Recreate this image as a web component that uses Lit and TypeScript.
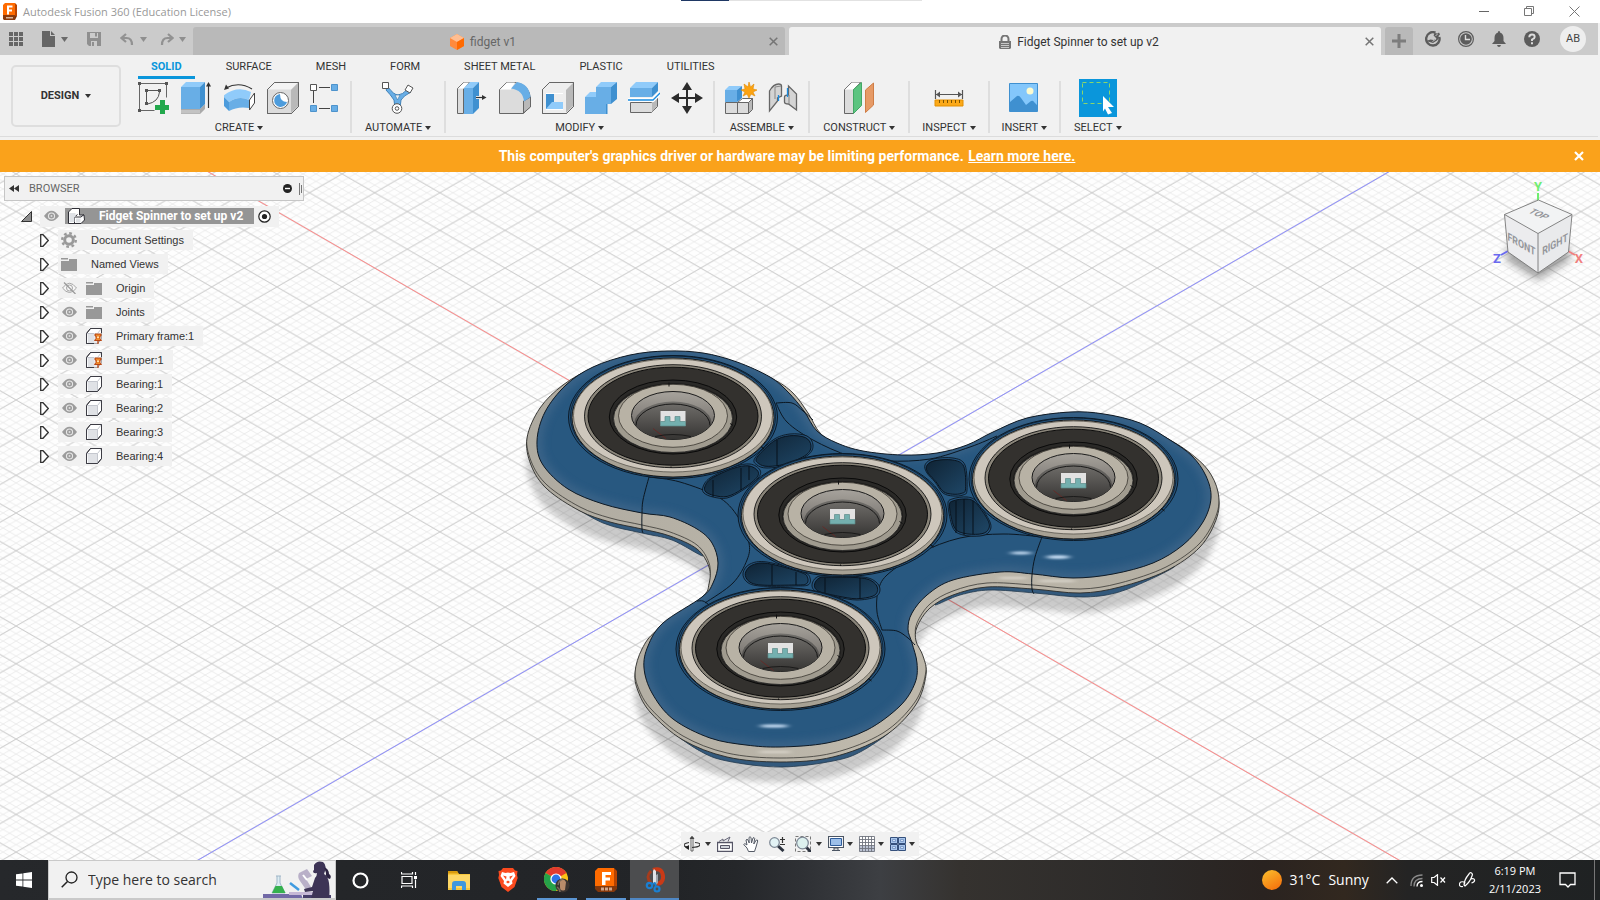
import { LitElement, html, svg, css } from "lit";
import { customElement, state } from "lit/decorators.js";
import { classMap } from "lit/directives/class-map.js";

/* ---------- shared styles ---------- */

const base = css`
  * { box-sizing: border-box; }
  svg { display: block; flex: none; }
  button {
    font: inherit; color: inherit; background: none; border: 0; padding: 0; margin: 0;
    display: flex; align-items: center; justify-content: center; cursor: pointer; white-space: nowrap;
  }
`;

/* ---------- icons: [width, height, drawing] ---------- */

const cube = (x = 0, y = 0) => svg`<g transform="translate(${x} ${y})" stroke="#3c3c44" stroke-linejoin="round">
  <path d="M.5 5.5 4.500.5h11v10l-4 5H.5z" fill="#fff"/><path d="M1.500 6h9.500v9h-9z" fill="#e0e2e6" stroke="none"/>
  <path d="M11.500 5.500h-11M11.500 5.500v10M11.500 5.500l4-5" fill="none" stroke="#c4c7ce"/><path d="M.5 5.500 4.500.5h11v10l-4 5H.5z" fill="none"/></g>`;

const folder = svg`<path d="M0 1h7v1.500H0zM8 2h8v12H0V4h8z" fill="#989898"/>`;

const icons: Record<string, [number, number, unknown]> = {
  fusion: [14, 17, svg`<path d="M2 0h10v13H0V2z" fill="#ff6b00"/><path d="M12 0l2 2v11h-2z" fill="#b84300"/><path d="M0 13h14l-2 4H2z" fill="#7a3208"/><path d="M0 12h12v5H1l-1-1z" fill="#8a3a0c"/><path d="M4 2.500h5.500v2H6v2h3v2H6v3H4z" fill="#fff"/><path d="M3 14h7v1.500H3z" fill="#d8b49c"/>`],
  minimize: [11, 11, svg`<path d="M0 5.500h10" stroke="#666"/>`],
  restore: [11, 11, svg`<path d="M.5 2.500h7v7h-7zM2.500 2.500v-2h7v7h-2" fill="none" stroke="#777"/>`],
  close: [11, 11, svg`<path d="M.5.5l10 10M10.500.5l-10 10" stroke="#777"/>`],
  grid: [14, 14, svg`<path d="M0 0h4v4H0zM5 0h4v4H5zM10 0h4v4h-4zM0 5h4v4H0zM5 5h4v4H5zM10 5h4v4h-4zM0 10h4v4H0zM5 10h4v4H5zM10 10h4v4h-4z" fill="#666"/>`],
  file: [13, 16, svg`<path d="M0 0h8v5h5v11H0zM9 0l4 4H9z" fill="#666"/>`],
  save: [14, 14, svg`<path d="M0 0h14v14H2l-2-2z" fill="#8f8f8f"/><path d="M3 1h8v5H3zM4 9h6v5H4z" fill="#cbcbcb"/><path d="M8 1h2v3.500H8zM5 10h2v4H5z" fill="#8f8f8f"/>`],
  undo: [14, 12, svg`<path d="M6 1 1.500 5 6 9M2 5h4.500Q12 5 12 12" fill="none" stroke="#929292" stroke-width="2.200"/>`],
  redo: [14, 12, svg`<path d="M8 1l4.500 4L8 9M12 5H7.500Q2 5 2 12" fill="none" stroke="#929292" stroke-width="2.200"/>`],
  down: [7, 5, svg`<path d="M0 0h7L3.500 5z" fill="currentColor"/>`],
  down5: [6, 4, svg`<path d="M0 0h6L3 4z" fill="currentColor"/>`],
  orangeCube: [14, 16, svg`<path d="M7 0l7 4v8l-7 4-7-4V4z" fill="#ff8a3c"/><path d="M7 0l7 4-7 4-7-4z" fill="#ffbe92"/><path d="M14 4v8l-7 4V8z" fill="#ff6a00"/>`],
  lock: [12, 14, svg`<path d="M0 6h12v7l-1 1H1l-1-1z" fill="#757575"/><path d="M2.500 6V4a3.500 3.500 0 0 1 7 0v2" fill="none" stroke="#757575" stroke-width="2"/><path d="M2 8.500h8M2 10.500h8M2 12.500h8" stroke="#ddd" stroke-width=".8"/>`],
  tabClose: [9, 9, svg`<path d="M.7.7l7.600 7.600M8.300.7.7 8.300" stroke="currentColor" stroke-width="1.500"/>`],
  plus: [14, 14, svg`<path d="M5.500 0h3v5.500H14v3H8.500V14h-3V8.500H0v-3h5.500z" fill="#7d7d7d"/>`],
  extension: [16, 16, svg`<path d="M10.500 1.700A6.700 6.700 0 1 0 14.300 6" fill="none" stroke="#5c5c5c" stroke-width="2.400"/><path d="M1 10l4.500-1.500L8.500 9l3-1.500L8.500 4.800 9.500 2l3 .5 1.500-1 1 2-1.500 1.500.5 2-2 2.500-4 2.500z" fill="#5c5c5c"/><path d="M8 4.500l3 3.500-3.500 2.500M12.500 3l-2 2" fill="none" stroke="#cbcbcb" stroke-width=".9"/>`],
  clock: [16, 16, svg`<circle cx="8" cy="8" r="7.400" fill="none" stroke="#5c5c5c" stroke-width="1.200"/><circle cx="8" cy="8" r="5.800" fill="#5c5c5c"/><path d="M7.500 4v4.500H12" fill="none" stroke="#ddd" stroke-width="1.400"/>`],
  bell: [14, 16, svg`<path d="M7 0q1 0 1 1.400Q11.500 2.500 11.500 7v3L14 13H0l2.500-3V7Q2.500 2.500 6 1.400 6 0 7 0zM5 14h4q-.5 2-2 2t-2-2z" fill="#5c5c5c"/>`],
  help: [16, 16, svg`<circle cx="8" cy="8" r="8" fill="#5c5c5c"/><path d="M5.300 6.200Q5.300 3.500 8 3.500t2.700 2.400Q10.700 7.300 8 8.500V10" fill="none" stroke="#ddd" stroke-width="1.900"/><path d="M7 11.200h2v2H7z" fill="#ddd"/>`],

  sketch: [32, 32, svg`<path d="M1.500 1.500h27v14M1.500 1.500v27h15" fill="none" stroke="#666"/><path d="M8.500 8.500h13M8.500 8.500v13M21.500 10q-1 10-12 12" fill="none" stroke="#555"/><path d="M0 0h3v3H0zM27 0h3v3h-3zM0 27h3v3H0zM7 7h3v3H7zM20 7h3v3h-3zM7 20h3v3H7z" fill="#555"/><path d="M22 18h5v5h4v5h-4v4h-5v-4h-5v-5h5z" fill="#22a84c"/>`],
  extrude: [32, 32, svg`<path d="M0 27h19l5-5v5l-5 5H0z" fill="#aaa"/><path d="M0 28h19v3.500H0z" fill="#c3c3c3"/><path d="M0 5h19v22H0z" fill="#68aee6"/><path d="M0 5l5-5h19l-5 5z" fill="#90cbfa"/><path d="M19 5l5-5v22l-5 5z" fill="#3f90d0"/><path d="M27.500 26V3" stroke="#333" stroke-width="1.200"/><path d="M27.500 0l2.500 4.500h-5z" fill="#333"/>`],
  revolve: [32, 32, svg`<path d="M2 6Q15-1 28 7" fill="none" stroke="#333" stroke-width="1.200"/><path d="M0 8l2-5.500 3 4z" fill="#333"/><path d="M-1 14Q13 3 27 10l-2 8q-10-5-20 2z" fill="#90cbfa"/><path d="M-1 14l6 6v9l-6-6z" fill="#4d9cdc"/><path d="M5 20q10-7 20-2v8Q14 24 5 29z" fill="#68aee6"/><path d="M25.500 18l5-7v10l-5 7z" fill="#fff" stroke="#444"/>`],
  hole: [32, 32, svg`<path d="M.5 7.500l7-7h24v24l-7 7H.5z" fill="#dcdcdc" stroke="#666"/><path d="M1 7.500l7-7h23l-7 7z" fill="#f4f4f4"/><path d="M24 8l7-7v23l-7 7z" fill="#b9b9b9"/><path d="M.5 7.500l7-7h24v24l-7 7H.5z" fill="none" stroke="#666"/><circle cx="13.500" cy="18.500" r="8" fill="#fff" stroke="#666"/><path d="M13 12a6.500 6.500 0 1 0 7 8q-7 0-7-8z" fill="#4d9cdc"/>`],
  pattern: [30, 32, svg`<path d="M9 5.500h11M3.500 9v12M9 26.500h11" stroke="#444"/><path d="M.5 2.500h6v6h-6z" fill="#fff" stroke="#555"/><path d="M21.500 2.500h6v6h-6zM.5 23.500h6v6h-6zM21.500 23.500h6v6h-6z" fill="#68aee6" stroke="#4d93cc"/>`],
  automate: [32, 32, svg`<path d="M6 5q6 8 10 8t10-6l3 3q-8 4-10 8l-1 8h-5l-1-8Q8 12 4 8z" fill="#68aee6" stroke="#4182b8"/><path d="M13 13h5l-2.500 5z" fill="#f1f1f1" stroke="#4182b8" stroke-width=".7"/><path d="M.5.5h6v6h-6zM26 3l5 3-3 5-5-3z" fill="#fff" stroke="#555"/><circle cx="15" cy="26.500" r="4.800" fill="#fff" stroke="#555"/><circle cx="15" cy="26.500" r="1.800" fill="none" stroke="#555"/>`],
  presspull: [32, 32, svg`<path d="M1.500 31.500v-25l6-6h6l-6 6v25z" fill="#dcdcdc" stroke="#666"/><path d="M2 6.500l6-6h5l-5 6z" fill="#fff"/><path d="M8 6h9v26H8z" fill="#68aee6"/><path d="M8 6l6-6h9l-6 6z" fill="#90cbfa"/><path d="M17 6l6-6v26l-6 6z" fill="#3f90d0"/><path d="M20 15.500h7" stroke="#fff" stroke-width="3"/><path d="M20 15.500h7" stroke="#333" stroke-width="1.300"/><path d="M30.500 15.500L26 13v5z" fill="#333"/>`],
  fillet: [32, 32, svg`<path d="M.5 31.500v-24l7-7H16q15 2 15.500 17v7l-7 7z" fill="#dcdcdc" stroke="#666"/><path d="M1 7.500l7-7h8l-4 7z" fill="#fff"/><path d="M24.500 19l7-4v10l-7 6z" fill="#b9b9b9" stroke="#666"/><path d="M12 6.500L18 0q12 2 13.500 15L25 19.500Q24 8 12 6.500z" fill="#68aee6"/>`],
  shell: [32, 32, svg`<path d="M.5 7.500l7-7h24v24l-7 7H.5z" fill="#eee" stroke="#666"/><path d="M24 8l7-7v23l-7 7z" fill="#b9b9b9"/><path d="M.5 7.500l7-7h24v24l-7 7H.5z" fill="none" stroke="#666"/><path d="M4 11h17v17H4z" fill="#fff"/><path d="M4 12h8v8l-7 7H4z" fill="#3f90d0"/><path d="M12 12h9v8h-9z" fill="#eee"/><path d="M10 20h11v7H4z" fill="#90cbfa"/>`],
  combine: [32, 32, svg`<path d="M0 15h11V5h15v17h-5v10H0z" fill="#68aee6"/><path d="M0 15l5-5h6v5zM11 5l5-5h16l-6 5z" fill="#90cbfa"/><path d="M26 5l6-5v17l-6 5zM21 22h1v10h-1z" fill="#3f90d0"/><path d="M22 22v10" stroke="#3f90d0" stroke-width="1"/>`],
  split: [32, 32, svg`<path d="M2.500 20.500h21l6-5v9l-6 6h-21z" fill="#dcdcdc" stroke="#666"/><path d="M24 21l5-5v8l-5 6z" fill="#b9b9b9"/><path d="M2 6h22v9H2z" fill="#68aee6"/><path d="M2 6l6-6h22l-6 6z" fill="#90cbfa"/><path d="M24 6l6-6v9l-6 6z" fill="#3f90d0"/><path d="M0 18h25l7-7" fill="none" stroke="#fff" stroke-width="4"/><path d="M0 18h25l7-7" fill="none" stroke="#1a8ce0" stroke-width="1.300"/>`],
  move: [32, 32, svg`<path d="M15 6h2v9h9v2h-9v9h-2v-9H6v-2h9z" fill="#2b2b2b"/><path d="M16 0l5 8H11zM16 32l5-8H11zM0 16l8-5v10zM32 16l-8-5v10z" fill="#2b2b2b"/>`],
  component: [32, 32, svg`<path d="M.5 20.500h12v11H.5zM12.500 20.500h11v11h-11z" fill="#dcdcdc" stroke="#666"/><path d="M12.500 20.500l5-4h10l-4 4z" fill="#fff" stroke="#666"/><path d="M23.500 20.500l4-4v11l-4 4z" fill="#b9b9b9" stroke="#666"/><path d="M0 8h12v12H0z" fill="#68aee6"/><path d="M0 8l4-4h13l-5 4z" fill="#90cbfa"/><path d="M12 8l5-4v12l-5 4z" fill="#3f90d0"/><path d="M24 0l1.500 5L29 2l-1 5 4 1-4 2 2 4-4-2-2 4-2-4-4 2 2-4-4-2 4-1-1-5 4 3z" fill="#fca311" stroke="#e08a00" stroke-width=".6"/>`],
  joint: [30, 32, svg`<path d="M1.500 9q4-7 9-7 3 0 3 2v10l-4 2v3l-8 10z" fill="#d4d4d4" stroke="#666" stroke-width="1.300"/><path d="M7 5v12M7 5l6-1" fill="none" stroke="#888"/><path d="M16.500 15q0-2 4-2V4l8 8v16l-8-6q-4 0-4-2z" fill="#d4d4d4" stroke="#666" stroke-width="1.300"/><path d="M21 13v9" stroke="#888"/><path d="M10.500 13v6M19.500 6v9" stroke="#1a8ce0" stroke-width="1.300"/>`],
  plane: [32, 32, svg`<path d="M1.500 31.500v-24l7-7h9l-7 7v24z" fill="#dcdcdc" stroke="#666"/><path d="M2 7.500l7-7h8l-7 7z" fill="#fff"/><path d="M10.500 7.500l8-7v23l-8 8z" fill="#5cc480" stroke="#43a866"/><path d="M22.500 8l8-7v22l-8 7.500z" fill="#e69a66" stroke="#cf7d45"/>`],
  measure: [30, 32, svg`<path d="M1.500 8v9M28.500 8v9M2 12.500h26" stroke="#555" stroke-width="1.200"/><path d="M2 12.500l4-3v6zM28 12.500l-4-3v6z" fill="#555"/><path d="M1 18h28v6H1z" fill="#fba919" stroke="#e38f00"/><path d="M5.500 18v3M9.500 18v3M13.500 18v3M17.500 18v3M21.500 18v3M25.500 18v3" stroke="#7a5200"/>`],
  image: [30, 32, svg`<path d="M.5 1.500h28v28H.5z" fill="#84c7fb" stroke="#3f90d0"/><path d="M1 20l7-6q2-1 4 2l5 7 5-4q2-1 3 1l3 3v6H1z" fill="#3f90d0"/><circle cx="21" cy="9" r="3.500" fill="#fdfbd0"/>`],
  select: [38, 38, svg`<path d="M0 0h38v38H0z" fill="#0a96db"/><path d="M3.500 3.500h27v21h-27z" fill="none" stroke="#8bd66b" stroke-dasharray="4 3"/><path d="M24 17l11 11h-6l4 6-4 1.500-3-6-2 3z" fill="#fff"/>`],

  rewind: [10, 7, svg`<path d="M5 0v7L0 3.500zM10 0v7L5 3.500z" fill="#333"/>`],
  minusDot: [9, 9, svg`<circle cx="4.500" cy="4.500" r="4.500" fill="#222"/><path d="M2 4.500h5" stroke="#fff" stroke-width="1.400"/>`],
  grip: [3, 12, svg`<path d="M.5 0v12M2.500 2v8" stroke="#777"/>`],
  expanded: [11, 11, svg`<path d="M.5 10.500h10V.5z" fill="#8f8f8f" stroke="#333"/>`],
  collapsed: [9, 13, svg`<path d="M.7.7h2.300l5.300 5.800L3 12.300H.7z" fill="#fff" stroke="#333" stroke-width="1.300"/>`],
  eye: [15, 12, svg`<path d="M0 6Q7.500-4.500 15 6 7.500 16 0 6z" fill="#9b9b9b"/><circle cx="7.500" cy="6" r="3.600" fill="#e8e8e8"/><circle cx="7.500" cy="6" r="2.500" fill="#9b9b9b"/><circle cx="7.500" cy="6" r="1" fill="#ddd"/>`],
  eyeOff: [15, 12, svg`<path d="M.5 6Q7.500-3.500 14.500 6 7.500 15 .5 6z" fill="#f6f6f6" stroke="#a5a5a5"/><circle cx="7.500" cy="6" r="3" fill="none" stroke="#a5a5a5"/><path d="M2 .5L13.500 12" stroke="#999" stroke-width="1.200"/>`],
  gear: [16, 16, svg`<circle cx="8" cy="8" r="4.300" fill="none" stroke="#999" stroke-width="3"/><circle cx="8" cy="8" r="6.800" fill="none" stroke="#999" stroke-width="2.400" stroke-dasharray="2.700 2.640"/>`],
  folder: [16, 14, folder],
  body: [16, 16, cube()],
  pinned: [16, 16, svg`${cube()}<path d="M8 5h8v11H8z" fill="#f1f1f1" opacity=".6"/><path d="M9 6h6v2h-1v2.500l1.500 2h-7l1.500-2V8H9z" fill="#f08a2c" stroke="#b23c0a" stroke-width=".9"/><path d="M11 8.500h2v1.500h-2z" fill="#ffe0b0"/><path d="M12 12.500V16" stroke="#b23c0a" stroke-width="1.200"/>`],
  assembly: [17, 16, svg`<g stroke="#2f2f36" stroke-linejoin="round"><path d="M.5 4L4 .5h7.500V7H16l.500 5L13 15.500H.500z" fill="#fff"/><path d="M6.500 9l3-2.500M6.500 9v6.500M6.500 9H13M13 9l3-2.500" fill="none"/><path d="M1.500 5h6v4h-1v5h-5zM8 10.500h4.500v4H8z" fill="#dfe2e6" stroke="none"/></g>`],
  radio: [13, 13, svg`<circle cx="6.500" cy="6.500" r="5.700" fill="#fff" stroke="#222" stroke-width="1.200"/><circle cx="6.500" cy="6.500" r="2.600" fill="#222"/>`],

  orbit: [16, 16, svg`<path d="M7 1h2v14H7z" fill="#fff" stroke="#555" stroke-width=".9"/><path d="M8 0l2.500 3h-5z" fill="#444"/><path d="M5 6.500q-5 1-5 2.500 0 2 5 2M11 6.500q5 .5 5 2 0 2.500-8 3" fill="none" stroke="#333" stroke-width="1.200"/><path d="M1 11.500l4-2.500v5z" fill="#222"/>`],
  lookat: [16, 16, svg`<path d="M.5 6.500h15v9H.5z" fill="#fff" stroke="#556" stroke-width="1.300"/><path d="M3.500 9.500h9v3h-9z" fill="#cfd3da" stroke="#556"/><path d="M2 5.500L6 3v2l7-4-2 4.500" fill="#e8eaee" stroke="#667"/>`],
  hand: [16, 16, svg`<path d="M5.500 15.500L4 12 .7 8.500Q1.500 6.500 4 9L3 4q1-1.500 2 0l1.200 3L6 1.500q1-1.500 2 0L8.500 7 10 2q1.200-1 1.700.3L10.800 8l2.500-4q1.500-.5 1.400 1L13 11l-1.500 4.500z" fill="#fff" stroke="#555b66"/>`],
  zoom: [16, 16, svg`<path d="M8.500 9.500l6 5.500" stroke="#2d3440" stroke-width="3"/><circle cx="5.500" cy="6.500" r="4.800" fill="#e3f3f5" stroke="#7c8794" stroke-width="1.200"/><path d="M13.500 1v6M11 3.500h5M11 8.500h5" stroke="#333" stroke-width="1.200"/>`],
  fit: [16, 16, svg`<path d="M.5.5h15v15H.5z" fill="none" stroke="#777" stroke-dasharray="3 2"/><path d="M11 11l5 5" stroke="#2d3440" stroke-width="3"/><circle cx="7.500" cy="7" r="5.800" fill="#dcf0ee" stroke="#7c8794" stroke-width="1.200"/>`],
  display: [16, 16, svg`<path d="M.5.5h15v11H.5z" fill="#fff" stroke="#4b5563" stroke-width="1.200"/><path d="M2.500 2.500h11v7h-11z" fill="#9dc0ea" stroke="#2f5d9c"/><path d="M6 12h4v2.500H6zM4 14.500h8" fill="#ddd" stroke="#4b5563"/>`],
  gridset: [16, 16, svg`<path d="M.5.5h15v15H.5z" fill="#fff"/><path d="M.5 10h15v5.500H.5z" fill="#bcc3d4"/><path d="M.5.5h15v15H.5zM3.500 0v16M6.500 0v16M9.500 0v16M12.500 0v16M0 3.500h16M0 6.500h16M0 9.500h16M0 12.500h16" fill="none" stroke="#70757f" stroke-width=".9"/>`],
  views: [16, 14, svg`<path d="M.5.5h7v6h-7zM8.500.5h7v6h-7zM.5 7.500h7v6h-7zM8.500 7.500h7v6h-7z" fill="#a9c6ec" stroke="#35507c"/><path d="M2.500 2.500h3v2h-3zM10.500 2.500h3v2h-3zM2.500 9.500h3v2h-3zM10.500 9.500h3v2h-3z" fill="#cfe0f6" stroke="#6f8fc0" stroke-width=".8"/>`],

  windows: [16, 16, svg`<path d="M0 2.300l6.500-.9v6.200H0zM7.300 1.300L16 0v7.600H7.300zM0 8.400h6.500v6.200L0 13.700zM7.300 8.400H16V16l-8.700-1.300z" fill="#fff"/>`],
  search: [17, 17, svg`<circle cx="10.500" cy="6.500" r="5.500" fill="none" stroke="#222" stroke-width="1.300"/><path d="M6.500 10.500L.7 16.300" stroke="#222" stroke-width="1.500"/>`],
  cortana: [17, 17, svg`<circle cx="8.500" cy="8.500" r="7" fill="none" stroke="#fff" stroke-width="2.200"/>`],
  taskview: [18, 16, svg`<path d="M1 4.500h10v7H1zM.5 0v2h11V0M.5 16v-2h11v2M14.500 0v3M14.500 7.500V16" fill="none" stroke="#fff" stroke-width="1.200"/><path d="M13 4h3v3h-3z" fill="#fff"/>`],
  explorer: [22, 19, svg`<path d="M0 0h9l2 3h11v16H0z" fill="#f8c73c"/><path d="M0 0h9l1.500 2.500H0z" fill="#d99b0d"/><path d="M0 4h22v13H0z" fill="#fdd766"/><path d="M4 19v-6q0-3 3-3h8q3 0 3 3v6h-4v-4H8v4z" fill="#3f97dd"/>`],
  brave: [20, 24, svg`<path d="M5 0h10l2 2.500 2.500.5-.5 4 .7 3-3.200 9-6.500 5-6.500-5L.3 10 1 7l-.5-4L3 2.500z" fill="#fb4a1e"/><path d="M4 4l3.500 1L10 4.500l2.500.5L16 4l1.500 4-3.500 5 .5 2.500L10 19l-4.500-3.500L6 13 2.500 8z" fill="#fff"/><path d="M5 7.500l3.500 1-.5 3zM15 7.500l-3.500 1 .5 3zM8 14l2-1.500 2 1.500-2 1.500z" fill="#fb4a1e"/>`],
  chrome: [26, 26, svg`<circle cx="12" cy="12" r="12" fill="#fbc116"/><path d="M12 12L1.600 6A12 12 0 0 1 22.400 6z" fill="#e33b2e"/><path d="M12 12L1.600 6A12 12 0 0 0 12 24l4-7z" fill="#25a249"/><circle cx="12" cy="12" r="5.600" fill="#fff"/><circle cx="12" cy="12" r="4.400" fill="#2f74e8"/><circle cx="18.500" cy="18.500" r="7" fill="#3b3430"/><path d="M16 13q4-2 6 2l-1 8q-5 2-5-3z" fill="#b98c6a"/><path d="M13 20q3 2 3 5M19 12q-4 1-5 6" fill="none" stroke="#7a6b5c" stroke-width="1.500"/>`],
  fusionBig: [22, 24, svg`<path d="M3 0h16v19H0V3z" fill="#ff6b00"/><path d="M19 0l3 3v16h-3z" fill="#b84300"/><path d="M0 18h22v3l-3 3H3l-3-3z" fill="#83370b"/><path d="M7 4h9v3h-5.500v2.500H15v3h-4.500V17H7z" fill="#fff"/><path d="M6 19.500h3v3H6zM10 19.500h3v3h-3zM14 19.500h3v3h-3z" fill="#cfa58b"/>`],
  snip: [20, 26, svg`<path d="M8 3q9-3 10 6 .5 7-6 8" fill="none" stroke="#c93a17" stroke-width="4"/><path d="M6 4Q0 10 6 16" fill="none" stroke="#a83c1c" stroke-width="3"/><path d="M9 2l2 2v13H8V4z" fill="#dfe3e8"/><path d="M11 8l2-1v9l-2 2z" fill="#9aa2ab"/><circle cx="4.500" cy="18.500" r="2.700" fill="none" stroke="#1b7fd0" stroke-width="2.200"/><circle cx="12" cy="22" r="2.500" fill="none" stroke="#1b7fd0" stroke-width="2.200"/><path d="M6.500 17.500l4-2M11 20l-1-4" stroke="#1b7fd0" stroke-width="1.800"/>`],
  sun: [20, 20, svg`<defs><linearGradient id="sunFill" x1="0" y1="0" x2=".6" y2="1"><stop offset="0" stop-color="#fbc02d"/><stop offset="1" stop-color="#f5760f"/></linearGradient></defs><circle cx="10" cy="10" r="10" fill="url(#sunFill)"/>`],
  chevron: [12, 7, svg`<path d="M.7 6.300L6 1l5.300 5.300" fill="none" stroke="#fff" stroke-width="1.300"/>`],
  wifi: [13, 13, svg`<g fill="none" stroke="#8a8a8a" stroke-width="1.300"><path d="M1 12Q1 1 12.500 1"/><path d="M4 12.500q0-8 8.500-8"/></g><path d="M7 12.500q0-5 5.500-5" fill="none" stroke="#fff" stroke-width="1.300"/><circle cx="11.500" cy="11.500" r="1.500" fill="#fff"/>`],
  mute: [15, 12, svg`<path d="M.7 3.500H3L6.500.7v10.600L3 8.500H.7z" fill="none" stroke="#fff" stroke-width="1.200"/><path d="M9.500 3.500l4.500 5M14 3.500l-4.500 5" stroke="#fff" stroke-width="1.200"/>`],
  pen: [17, 16, svg`<path d="M5 13q0-5 5-11 1-2 2.500-1t.500 3q-2 6-7 10zM5 13l1-3M5 10q-4-1-4.500 2t3.500 2.500M12 7q3-1 3.500 1t-3 3" fill="none" stroke="#fff" stroke-width="1.200"/>`],
  notice: [17, 16, svg`<path d="M1 1h15v11.500h-4.500L9 15l-2.500-2.500H1z" fill="none" stroke="#fff" stroke-width="1.300"/>`],
  bannerClose: [10, 10, svg`<path d="M1 1l8 8M9 1L1 9" stroke="#fff" stroke-width="2.200"/>`],
};

const icon = (name: string) => {
  const [w, h, art] = icons[name];
  return html`<svg width=${w} height=${h} viewBox="0 0 ${w} ${h}" aria-hidden="true">${art}</svg>`;
};

/* ---------- window frame: title and document tabs ---------- */

@customElement("window-header")
class WindowHeader extends LitElement {
  static styles = [base, css`
    :host { display: block; font: 12px/16px Roboto, sans-serif; color: #444; background: #f1f1f1; }
    .title { display: flex; align-items: center; height: 23px; background: #fff; padding: 0 20px 0 3px; color: #999; gap: 6px;
      font: 11px/16px "Open Sans", "Noto Sans", sans-serif; }
    .name { flex: 1; }
    .loading { align-self: flex-start; width: 241px; height: 1px; margin-right: 1px; background: linear-gradient(90deg, #1f3864 48px, #e2e2e2 48px); }
    .controls { flex: 1; display: flex; justify-content: flex-end; gap: 34px; }
    .bar { display: flex; height: 32px; background: #cbcbcb; margin-right: 2px; }
    .quick { width: 193px; display: flex; align-items: center; padding-left: 9px; color: #6a6a6a; }
    .quick .file { margin-left: 19px; gap: 6px; }
    .quick .save { margin-left: 19px; }
    .quick .undo { margin-left: 19px; gap: 6px; color: #8f8f8f; }
    .quick .redo { margin-left: 13px; gap: 5px; color: #8f8f8f; }
    .tabs { flex: 1; display: flex; gap: 4px; padding-top: 4px; }
    .tab { flex: 1; display: flex; align-items: center; padding: 0 7px 0 4px; background: #b9b9b9; border-radius: 3px 3px 0 0; color: #666; }
    .tab.on { background: #f1f1f1; color: #333; }
    .label { flex: 1; gap: 6px; padding-top: 1px; }
    .x { color: #757575; }
    .plus { width: 28px; margin: 4px 0 0 4px; background: #b9b9b9; border-radius: 3px 3px 0 0; }
    .right { display: flex; align-items: center; padding: 0 12px; gap: 17px; }
    .right button { min-width: 16px; }
    .right .avatar { width: 26px; height: 26px; margin-left: 3px; border-radius: 13px; background: #eee; color: #444; font-size: 11px; }
  `];
  render() {
    return html`
      <div class="title">${icon("fusion")}<span class="name">Autodesk Fusion 360 (Education License)</span>
        <div class="loading"></div>
        <div class="controls"><button aria-label="Minimize">${icon("minimize")}</button><button aria-label="Restore">${icon("restore")}</button><button aria-label="Close">${icon("close")}</button></div>
      </div>
      <div class="bar">
        <div class="quick">
          <button aria-label="Data panel">${icon("grid")}</button>
          <button class="file" aria-label="File">${icon("file")}${icon("down")}</button>
          <button class="save" aria-label="Save">${icon("save")}</button>
          <button class="undo" aria-label="Undo">${icon("undo")}${icon("down")}</button>
          <button class="redo" aria-label="Redo">${icon("redo")}${icon("down")}</button>
        </div>
        <div class="tabs">
          <div class="tab"><button class="label">${icon("orangeCube")}fidget v1</button><button class="x" aria-label="Close tab">${icon("tabClose")}</button></div>
          <div class="tab on"><button class="label">${icon("lock")}Fidget Spinner to set up v2</button><button class="x" aria-label="Close tab">${icon("tabClose")}</button></div>
        </div>
        <button class="plus" aria-label="New design">${icon("plus")}</button>
        <div class="right">
          <button aria-label="Extensions">${icon("extension")}</button><button aria-label="Job status">${icon("clock")}</button>
          <button aria-label="Notifications">${icon("bell")}</button><button aria-label="Help">${icon("help")}</button>
          <button class="avatar">AB</button>
        </div>
      </div>`;
  }
}

/* ---------- ribbon ---------- */

const groups: { name: string; tools: string[]; size?: string }[] = [
  { name: "CREATE", tools: ["sketch", "extrude", "revolve", "hole", "pattern"] },
  { name: "AUTOMATE", tools: ["automate"], size: "wide" },
  { name: "MODIFY", tools: ["presspull", "fillet", "shell", "combine", "split", "move"] },
  { name: "ASSEMBLE", tools: ["component", "joint"] },
  { name: "CONSTRUCT", tools: ["plane"], size: "wide" },
  { name: "INSPECT", tools: ["measure"], size: "slim" },
  { name: "INSERT", tools: ["image"], size: "slim" },
  { name: "SELECT", tools: ["select"], size: "wide" },
];

@customElement("tool-ribbon")
class ToolRibbon extends LitElement {
  @state() private tab = "SOLID";
  static styles = [base, css`
    :host { display: flex; height: 85px; background: #f1f1f1; color: #333; font: 11px/14px Roboto, sans-serif; padding-left: 11px;
      background-image: linear-gradient(#dcdcdc, #dcdcdc); background-size: calc(100% - 2px) 1px; background-position: 0 81px; background-repeat: no-repeat; }
    .design { width: 110px; height: 62px; margin-top: 10px; border: 2px solid #dedede; border-radius: 5px; font-weight: 700; gap: 6px; }
    .main { margin-left: 17px; }
    .tabs { display: flex; gap: 18px; height: 24px; }
    .tabs button { padding: 4px 13px 1px; border-bottom: 3px solid transparent; }
    .tabs .on { color: #0a96db; font-weight: 700; border-bottom-color: #0a96db; }
    .groups { display: flex; }
    .group { display: flex; flex-direction: column; align-items: center; padding: 0 10px; border-right: 2px solid #dedede; height: 52px; margin-top: 2px; }
    .group:first-child { padding-left: 0; }
    .group:last-child { border: 0; }
    .group.wide { padding: 0 13px; }
    .group.slim { padding: 0 12px; }
    .tools { display: flex; flex: none; height: 34px; gap: 11px; align-items: center; }
    .menu { flex: none; gap: 3px; margin-top: 6px; }
  `];
  render() {
    return html`
      <button class="design">DESIGN ${icon("down5")}</button>
      <div class="main">
        <div class="tabs">${["SOLID", "SURFACE", "MESH", "FORM", "SHEET METAL", "PLASTIC", "UTILITIES"].map(t =>
          html`<button class=${classMap({ on: t === this.tab })} @click=${() => (this.tab = t)}>${t}</button>`)}</div>
        <div class="groups">${groups.map(g => html`
          <div class=${classMap({ group: true, wide: g.size === "wide", slim: g.size === "slim" })}>
            <div class="tools">${g.tools.map(t => html`<button aria-label=${t}>${icon(t)}</button>`)}</div>
            <button class="menu">${g.name} ${icon("down5")}</button>
          </div>`)}</div>
      </div>`;
  }
}

/* ---------- 3D scene ---------- */

type Pt = [number, number];

/* Catmull-Rom spline through the points, written as cubic segments. */
const smooth = (p: Pt[], closed = true) => {
  const n = p.length;
  const at = (i: number) => (closed ? p[(i + n) % n] : p[Math.max(0, Math.min(n - 1, i))]);
  let d = `M${p[0][0]} ${p[0][1]}`;
  for (let i = 0; i < (closed ? n : n - 1); i++) {
    const [a, b, c, e] = [at(i - 1), at(i), at(i + 1), at(i + 2)];
    d += `C${(b[0] + (c[0] - a[0]) / 6).toFixed(1)} ${(b[1] + (c[1] - a[1]) / 6).toFixed(1)} ${(c[0] - (e[0] - b[0]) / 6).toFixed(1)} ${(c[1] - (e[1] - b[1]) / 6).toFixed(1)} ${c[0]} ${c[1]}`;
  }
  return closed ? d + "Z" : d;
};

/* Scales an outline about its own middle. */
const inset = (p: Pt[], kx: number, ky: number): Pt[] => {
  const cx = p.reduce((a, q) => a + q[0], 0) / p.length;
  const cy = p.reduce((a, q) => a + q[1], 0) / p.length;
  return p.map(([x, y]): Pt => [cx + (x - cx) * kx, cy + (y - cy) * ky]);
};

const rimOuter: Pt[] = [
  [563, 385], [540, 408], [527, 438], [531, 465], [547, 489], [580, 511], [610, 522], [642, 529], [670, 536], [697, 549], [709, 567], [709, 584], [701, 598],
  [657, 630], [642, 649], [635, 672], [638, 691], [651, 713], [683, 740], [727, 757], [780, 762], [833, 757], [883, 737], [915, 706], [926, 675], [923, 656],
  [916, 641], [917, 627], [930, 608], [953, 595], [987, 587], [1033, 589], [1080, 593], [1120, 587], [1166, 571], [1200, 547], [1217, 517], [1218, 492], [1208, 470], [1190, 453],
  [1170, 440], [1140, 424], [1104, 415], [1070, 413], [1027, 419], [993, 433], [967, 446], [937, 454], [902, 456], [863, 452], [837, 444], [820, 433], [808, 413], [793, 393],
  [773, 379], [737, 363], [703, 354], [667, 352], [630, 356], [593, 368],
];
const topFace: Pt[] = [
  [566, 385], [545, 412], [537, 441], [543, 465], [568, 489], [603, 504], [642, 513], [670, 517], [697, 529], [712, 543], [718, 563], [713, 583], [702, 597],
  [663, 623], [648, 646], [644, 668], [652, 693], [673, 719], [710, 738], [746, 745], [780, 747], [827, 743], [867, 730], [900, 706], [915, 683], [917, 663], [912, 643],
  [908, 629], [912, 613], [927, 595], [953, 580], [1000, 572], [1033, 574], [1073, 578], [1113, 574], [1153, 563], [1183, 545], [1203, 522], [1211, 498], [1206, 476], [1192, 456],
  [1170, 440], [1140, 423], [1104, 414], [1070, 412], [1027, 418], [993, 432], [967, 445], [937, 453], [902, 455], [863, 451], [837, 443], [817, 431], [804, 411], [788, 392],
  [770, 377], [737, 362], [703, 353], [667, 351], [630, 355], [593, 367],
];
/* Slivers of the lower blue shell that show below the rim. */
const underside: Pt[][] = [
  [[568, 502], [603, 523], [642, 533], [672, 540], [703, 556], [690, 540], [642, 524], [600, 512]],
  [[675, 732], [700, 751], [727, 761], [780, 767], [833, 761], [862, 751], [890, 730], [833, 750], [780, 755], [727, 750]],
  [[935, 605], [960, 595], [990, 590], [1035, 593], [1085, 597], [1125, 590], [1175, 566], [1120, 580], [1080, 586], [1033, 584], [987, 580], [950, 592]],
];
const pockets: Pt[][] = [
  [[755, 458], [773, 440], [790, 434], [807, 436], [813, 445], [808, 455], [787, 465], [767, 468], [757, 465]],
  [[703, 487], [710, 478], [733, 467], [750, 464], [760, 470], [758, 478], [743, 490], [727, 498], [713, 497], [704, 493]],
  [[743, 573], [750, 564], [767, 562], [803, 572], [810, 578], [808, 585], [793, 586], [760, 586], [747, 582]],
  [[812, 585], [817, 577], [830, 576], [863, 577], [876, 582], [880, 590], [875, 597], [857, 600], [837, 597], [817, 592]],
  [[925, 465], [933, 459], [953, 458], [965, 465], [967, 490], [963, 495], [953, 496], [943, 493], [935, 482], [927, 473]],
  [[948, 505], [952, 499], [967, 497], [977, 502], [990, 522], [989, 532], [980, 536], [963, 535], [953, 528]],
];
const seams: Pt[][] = [
  [[649, 477], [680, 482], [720, 498], [740, 520], [749, 543], [747, 560], [733, 583], [705, 603]],
  [[649, 477], [643, 500], [642, 514], [642, 529], [643, 533]],
  [[776, 403], [792, 403], [803, 411], [813, 420]],
  [[776, 403], [787, 422], [813, 440], [850, 456], [887, 461], [930, 459], [970, 447], [997, 436]],
  [[882, 630], [877, 612], [878, 592], [887, 575], [920, 553], [960, 538], [1003, 534], [1042, 537]],
  [[1042, 537], [1035, 557], [1032, 575], [1032, 589], [1034, 594]],
  [[882, 630], [897, 631], [908, 638], [915, 645]],
  [[697, 601], [703, 601], [708, 604]],
];

const bearing = (x: number, y: number) => svg`<g transform="translate(${x} ${y})">
  <ellipse cx="0" cy="-1.500" rx="104.500" ry="61.500" fill="#24527a" stroke="#0b1a28"/>
  <ellipse cx="0" cy="-2" rx="102.500" ry="60.500" fill="none" stroke="#0b1a28" stroke-width=".8"/>
  <ellipse cx="0" cy="-1" rx="101" ry="59.500" fill="#a7a194" stroke="#111" stroke-width=".9"/>
  <ellipse cx="0" cy="-3" rx="99.500" ry="56.500" fill="#cec7bc" stroke="#4a4740" stroke-width=".7"/>
  <ellipse cx="0" cy="-2.300" rx="88.500" ry="51.500" fill="#8a857a" stroke="#111" stroke-width=".9"/>
  <ellipse cx="0" cy="-2.300" rx="85" ry="49" fill="#33312e" stroke="#0c0c0c"/>
  <ellipse cx="0" cy="-1.500" rx="63.700" ry="37" fill="#2a2927" stroke="#0a0a0a"/>
  <ellipse cx="0" cy="-.5" rx="60.500" ry="35" fill="#1d1c1b"/>
  <ellipse cx="0" cy="0" rx="59.500" ry="34" fill="#a09b8f" stroke="#222" stroke-width=".8"/>
  <ellipse cx="0" cy="-2.700" rx="54.500" ry="31.500" fill="#b8b2a5" stroke="#38352f" stroke-width=".8"/>
  <ellipse cx="0" cy="-3" rx="41.500" ry="24" fill="url(#bore)" stroke="#1c1c1c"/>
  <path d="M-38.800 5.500A37 21.500 0 0 1 38.800 5.500Q26 21 0 21T-38.800 5.500z" fill="url(#boreFloor)"/>
  <path d="M-37 7A37 21.500 0 0 1 37 7" fill="none" stroke="#111" stroke-width=".9"/>
  <path d="M-20 10L-7 20" stroke="#6b2622" stroke-width=".8"/><path d="M-18 18q18-4 36 0" fill="none" stroke="#111" stroke-width=".8"/>
  <path d="M-4-36v4M88 28l3 2.500M57 5l3 2M-2 48v1.500" stroke="#111"/>
  <path d="M-12.500-7.500h25v15h-25z" fill="#e2e2e2"/>
  <path d="M-12.500 3h4.500v-5h5v5h5v-5h5v5h5.500v4.500h-25z" fill="#74b0af" stroke="#5d8988" stroke-width=".7"/>
</g>`;

@customElement("model-scene")
class ModelScene extends LitElement {
  static styles = [base, css`
    :host { display: block; min-width: 0; min-height: 0; overflow: hidden; }
    svg { width: 100%; height: 100%; }
  `];
  render() {
    const rim = smooth(rimOuter);
    const top = smooth(topFace);
    return html`<svg viewBox="0 172 1600 688" preserveAspectRatio="xMidYMid slice" role="img" aria-label="Fidget spinner model">
      <defs>
        <pattern id="minor" patternUnits="userSpaceOnUse" x="798.500" y="513" width="13.040" height="7.536">
          <path d="M0 0l13.040 7.536M0 7.536L13.040 0" stroke="#e8e8e8" stroke-width=".8"/></pattern>
        <pattern id="major" patternUnits="userSpaceOnUse" x="798.500" y="513" width="65.200" height="37.680">
          <path d="M0 0l65.200 37.680M0 37.680L65.200 0" stroke="#c9c9c9" stroke-width=".9"/></pattern>
        <linearGradient id="bore" x1="0" y1="0" x2="0" y2="1"><stop offset="0" stop-color="#a7a39c"/><stop offset=".5" stop-color="#85817c"/><stop offset="1" stop-color="#4c4a47"/></linearGradient>
        <linearGradient id="boreFloor" x1="0" y1="0" x2="0" y2="1"><stop offset="0" stop-color="#72706c"/><stop offset=".6" stop-color="#4e4c4a"/><stop offset="1" stop-color="#353432"/></linearGradient>
        <linearGradient id="pocket" x1="0" y1="0" x2="1" y2="1"><stop offset="0" stop-color="#0f2334"/><stop offset="1" stop-color="#1f4767"/></linearGradient>
        <linearGradient id="rimFill" x1="0" y1="0" x2="1" y2="0"><stop offset="0" stop-color="#aeaaa0"/><stop offset=".5" stop-color="#bfb9ac"/><stop offset="1" stop-color="#b3aea2"/></linearGradient>
        <filter id="soft" x="-10%" y="-10%" width="120%" height="120%"><feGaussianBlur stdDeviation="3"/></filter>
        <filter id="edge" x="-10%" y="-10%" width="120%" height="120%"><feGaussianBlur stdDeviation="5"/></filter>
        <filter id="glint" x="-50%" y="-200%" width="200%" height="500%"><feGaussianBlur stdDeviation="3 1"/></filter>
        <clipPath id="topClip"><path d=${top}/></clipPath>
        <clipPath id="rimClip"><path d=${rim}/></clipPath>
      </defs>
      <rect y="0" x="-800" width="3200" height="1100" fill="#fefefe"/>
      <rect y="0" x="-800" width="3200" height="1100" fill="url(#minor)"/>
      <rect y="0" x="-800" width="3200" height="1100" fill="url(#major)"/>
      <path d="M-201.500-65L1798.500 1091" stroke="#ff8a8a"/><path d="M1798.500-65L-201.500 1091" stroke="#8e8eff"/>
      <path d=${rim} transform="translate(0 20)" fill="#000" opacity=".2" filter="url(#soft)"/>
      ${underside.map(u => svg`<path d=${smooth(u)} fill="#33597c" stroke="#22384c" stroke-width=".8"/>`)}
      <path d=${rim} fill="url(#rimFill)" stroke="#2a2a28" stroke-width=".9"/>
      <g clip-path="url(#rimClip)"><path d=${rim} transform="translate(0 -4)" fill="none" stroke="#3a3935" stroke-width=".8"/></g>
      <path d=${top} fill="#285880"/>
      <g clip-path="url(#topClip)">
        <path d=${top} fill="none" stroke="#5b7897" stroke-width="8" opacity=".5" filter="url(#edge)"/>
        <g filter="url(#glint)" fill="#cfe4fa"><ellipse cx="1021" cy="553" rx="11" ry="1.500"/><ellipse cx="1058" cy="557" rx="12" ry="1.800"/><ellipse cx="774" cy="726" rx="14" ry="1.600"/></g>
      </g>
      <path d=${top} fill="none" stroke="#101a24"/>
      <g filter="url(#glint)" stroke="#e6e2da" stroke-width="1.500"><path d="M1000 578h26M1040 581h34M760 752h30"/></g>
      ${seams.map(s => svg`<path d=${smooth(s, false)} fill="none" stroke="#0b1722"/>`)}
      ${pockets.map(p => svg`<path d=${smooth(p)} fill="#24527a" stroke="#0b1722" stroke-width=".9"/><path d=${smooth(inset(p, .93, .9))} fill="url(#pocket)" stroke="#081018" stroke-width=".9"/>`)}
      <path d="M777 440v26M713 480v17M741 468v22M749 466v14M772 565v20M796 572v13M825 578v15M860 578v21M956 501v32M964 499v36M973 501v33" stroke="#07101a"/>
      ${bearing(673, 418.5)}${bearing(1073.5, 480.5)}${bearing(842.5, 516.5)}${bearing(780.5, 650.5)}
    </svg>`;
  }
}

/* ---------- browser tree ---------- */

const rows: { label: string; icon: string; eye?: string }[] = [
  { label: "Document Settings", icon: "gear" },
  { label: "Named Views", icon: "folder" },
  { label: "Origin", icon: "folder", eye: "eyeOff" },
  { label: "Joints", icon: "folder", eye: "eye" },
  { label: "Primary frame:1", icon: "pinned", eye: "eye" },
  { label: "Bumper:1", icon: "pinned", eye: "eye" },
  { label: "Bearing:1", icon: "body", eye: "eye" },
  { label: "Bearing:2", icon: "body", eye: "eye" },
  { label: "Bearing:3", icon: "body", eye: "eye" },
  { label: "Bearing:4", icon: "body", eye: "eye" },
];

@customElement("browser-tree")
class BrowserTree extends LitElement {
  static styles = [base, css`
    :host { display: block; width: 300px; margin: 4px 0 0 4px; font: 11px/14px "Liberation Sans", Arial, sans-serif; color: #333; }
    .head { display: flex; align-items: center; height: 25px; background: #f1f1f1; border: 1px solid #c6c6c6; padding: 0 1px 0 4px; gap: 9px; color: #666; font-family: Roboto, sans-serif; }
    .head span { flex: 1; padding-left: 1px; }
    .head button + button { margin-left: -2px; }
    ul { list-style: none; margin: 3px 0 0; padding: 0; }
    li { display: flex; align-items: center; height: 24px; padding-left: 36px; }
    li.root { padding-left: 17px; }
    .chip { display: flex; align-items: center; height: 20px; background: #f1f1f1; margin-left: 9px; padding: 0 9px 0 3px; }
    .root .chip { height: 21px; margin-left: 8px; padding-right: 8px; }
    .eye { width: 16px; margin-right: 9px; }
    .name { margin-left: 14px; }
    .sel { height: 16px; background: #959595; color: #fff; font: 700 12px/16px Roboto, sans-serif; padding: 0 11px 0 3px; margin-right: 4px; }
    .root .eye { margin-right: 6px; }
  `];
  render() {
    return html`
      <div class="head"><button aria-label="Collapse">${icon("rewind")}</button><span>BROWSER</span><button aria-label="Hide">${icon("minusDot")}</button><button aria-label="Resize">${icon("grip")}</button></div>
      <ul>
        <li class="root"><button aria-label="Collapse">${icon("expanded")}</button>
          <div class="chip"><button class="eye" aria-label="Visibility">${icon("eye")}</button><button class="sel">${icon("assembly")}<span class="name">Fidget Spinner to set up v2</span></button><button aria-label="Activate">${icon("radio")}</button></div></li>
        ${rows.map(r => html`<li><button aria-label="Expand">${icon("collapsed")}</button>
          <div class="chip">${r.eye ? html`<button class="eye" aria-label="Visibility">${icon(r.eye)}</button>` : ""}<button>${icon(r.icon)}<span class="name">${r.label}</span></button></div></li>`)}
      </ul>`;
  }
}

/* ---------- taskbar ---------- */

@customElement("task-bar")
class TaskBar extends LitElement {
  static styles = [base, css`
    :host { display: flex; height: 40px; color: #fff; font: 14px/20px "Open Sans", "Noto Sans", sans-serif;
      background: linear-gradient(90deg, #26282b 0, #222427 42%, #25272a 46%, #2e3034 50%, #3d3f43 55%, #35322f 60%, #2c2a29 72%, #2a2320 79%, #32281f 84%, #242424 88%, #1f2223 100%); }
    .start { width: 48px; }
    .search { width: 288px; display: flex; align-items: center; background: #f1f1f1; border: 1px solid #c9c9c9; border-width: 1px 1px 2px; padding-left: 12px; gap: 10px; overflow: hidden; }
    input { flex: 1; min-width: 0; border: 0; outline: 0; background: none; padding: 0; font: inherit; color: #333; }
    input::placeholder { color: #333; opacity: 1; }
    .app { width: 49px; border-bottom: 2px solid transparent; padding-top: 2px; }
    .run { width: 40px; margin: 0 4px 0 5px; border-bottom-color: #5b95d2; }
    .on { background: #4c4d4f; border-bottom-color: #4f87c4; }
    .tray { margin-left: auto; display: flex; align-items: center; }
    .weather { gap: 8px; }
    .chev { margin-left: 17px; } .net { margin-left: 12px; } .vol { margin-left: 8px; } .pen { margin-left: 13px; }
    .time { flex-direction: column; margin-left: 13px; font-size: 11px; line-height: 18px; }
    .note { margin: 0 18px; }
    .desk { width: 6px; height: 40px; border-left: 1px solid #777; }
  `];
  render() {
    return html`
      <button class="start" aria-label="Start">${icon("windows")}</button>
      <label class="search">${icon("search")}<input type="text" placeholder="Type here to search" aria-label="Search">
        <svg width="72" height="38" viewBox="0 0 72 38">
          <path d="M0 33h38l2 5H0z" fill="#7269a6"/><path d="M26 31h24v3H26z" fill="#c6b9d6"/><path d="M40 34h28v4H40z" fill="#463e6b"/>
          <path d="M13 15h5M14 15v7L9 32h13l-5-10v-7" fill="#dcecf2" stroke="#9fb6c8"/><path d="M12.500 25h6.500l3.500 7H9z" fill="#35b14e"/>
          <path d="M27 22l9 7" stroke="#3f9be0" stroke-width="2.500"/><path d="M36 12l8-4 5 7-6 3 5 8-4 4-7-10q-3-4-1-8z" fill="#b9b0c8"/><path d="M40 14l4 5" stroke="#fff" stroke-width="2"/>
          <path d="M51 4q3-5 9-3 4 3 2 9l-1 3q4 2 5 9 1 8 0 16H48l2-8-8 1-1-3 8-2 3-9q2-2 2-5-4 1-4-2l1-1z" fill="#3d3456"/>
          <path d="M61 6q5 2 5 7 3 2 1 5-5-1-4-6z" fill="#2c2342"/>
        </svg></label>
      <button class="app" aria-label="Cortana">${icon("cortana")}</button>
      <button class="app" aria-label="Task view">${icon("taskview")}</button>
      <button class="app" aria-label="Explorer">${icon("explorer")}</button>
      <button class="app" aria-label="Brave">${icon("brave")}</button>
      <button class="app run" aria-label="Chrome">${icon("chrome")}</button>
      <button class="app run" aria-label="Fusion 360">${icon("fusionBig")}</button>
      <button class="app on" aria-label="Snipping tool">${icon("snip")}</button>
      <div class="tray">
        <button class="weather">${icon("sun")}<span>31°C</span><span>Sunny</span></button>
        <button class="chev" aria-label="Hidden icons">${icon("chevron")}</button>
        <button class="net" aria-label="Network">${icon("wifi")}</button>
        <button class="vol" aria-label="Volume">${icon("mute")}</button>
        <button class="pen" aria-label="Ink">${icon("pen")}</button>
        <button class="time"><span>6:19 PM</span><span>2/11/2023</span></button>
        <button class="note" aria-label="Notifications">${icon("notice")}</button>
        <div class="desk"></div>
      </div>`;
  }
}

/* ---------- page ---------- */

@customElement("app-root")
class AppRoot extends LitElement {
  static styles = [base, css`
    :host { display: flex; flex-direction: column; height: 100vh; overflow: hidden; background: #fff; }
    .banner { display: flex; align-items: center; height: 32px; background: #faa21b; color: #fff; font: 700 14px/18px Roboto, Arial, sans-serif; padding: 0 16px 0 0; }
    .banner p { flex: 1; margin: 0; text-align: center; }
    .banner a { color: #fff; margin-left: 1px; }
    .view { flex: 1; min-height: 0; display: grid; grid-template: minmax(0, 1fr) / minmax(0, 1fr); }
    .view > * { grid-area: 1 / 1; }
    browser-tree { justify-self: start; align-self: start; }
    .cube { justify-self: end; margin: 6px 10px 0 0; }
    .nav { place-self: end center; display: flex; align-items: center; height: 24px; margin-bottom: 4px; background: #f1f1f1; padding: 0 4px 0 3px; gap: 10px; color: #333; }
    .nav button { gap: 3px; }
    .nav .gap { gap: 5px; margin-right: -4px; }
    .nav .tight { margin-right: -4px; }
    .nav .last { margin-right: 0; }
    .cubeText { font: 700 11px Roboto, sans-serif; fill: #94969b; text-anchor: middle; }
    .axis { font: 700 13px Roboto, sans-serif; text-anchor: middle; }
  `];
  render() {
    return html`
      <window-header></window-header>
      <tool-ribbon></tool-ribbon>
      <div class="banner"><p>This computer's graphics driver or hardware may be limiting performance. <a href="#">Learn more here.</a></p><button aria-label="Dismiss">${icon("bannerClose")}</button></div>
      <div class="view">
        <model-scene></model-scene>
        <browser-tree></browser-tree>
        <svg class="cube" width="100" height="112" viewBox="1490 178 100 112">
          <defs><filter id="cs" x="-30%" y="-50%" width="160%" height="200%"><feGaussianBlur stdDeviation="4"/></filter></defs>
          <path d="M1508 246l30-10 30 10 2 14-32 20-32-20z" fill="#666" opacity=".6" filter="url(#cs)"/>
          <path d="M1538 193v8" stroke="#6fee6f" stroke-width="2"/><path d="M1508 251l-7 4" stroke="#6a6af0" stroke-width="2"/><path d="M1568 251l7 4" stroke="#f08080" stroke-width="2"/>
          <path d="M1504.500 214.500l34-14.500 33.500 14.500-34 19z" fill="#f2f3f4"/><path d="M1504.500 214.500l33.500 19v39.500l-30-21z" fill="#ececee"/><path d="M1571.500 214.500l-33.500 19v39.500l30.500-21z" fill="#e9eaec"/>
          <path d="M1504.500 214.500l34-14.500 33.500 14.500-34 19zl3.500 37.500 30 21 30.500-21 3.500-37.500M1538 233.500V273" fill="none" stroke="#777" stroke-width=".9"/>
          <text class="cubeText" transform="matrix(.8 .45 0 1 1521.500 248)">FRONT</text>
          <text class="cubeText" transform="matrix(.8 -.45 0 1 1555 248)">RIGHT</text>
          <text class="cubeText" transform="matrix(.8 .35 -.8 .5 1536 216)">TOP</text>
          <text class="axis" x="1538" y="191" fill="#6fee6f">Y</text><text class="axis" x="1497" y="263" fill="#6a6af0">Z</text><text class="axis" x="1579" y="263" fill="#f08080">X</text>
        </svg>
        <div class="nav">
          <button class="gap" aria-label="Orbit">${icon("orbit")}${icon("down5")}</button>
          <button aria-label="Look at">${icon("lookat")}</button>
          <button aria-label="Pan">${icon("hand")}</button>
          <button aria-label="Zoom">${icon("zoom")}</button>
          <button class="gap" aria-label="Fit">${icon("fit")}${icon("down5")}</button>
          <button class="tight" aria-label="Display settings">${icon("display")}${icon("down5")}</button>
          <button class="tight" aria-label="Grid settings">${icon("gridset")}${icon("down5")}</button>
          <button class="last" aria-label="Viewports">${icon("views")}${icon("down5")}</button>
        </div>
      </div>
      <task-bar></task-bar>`;
  }
}
